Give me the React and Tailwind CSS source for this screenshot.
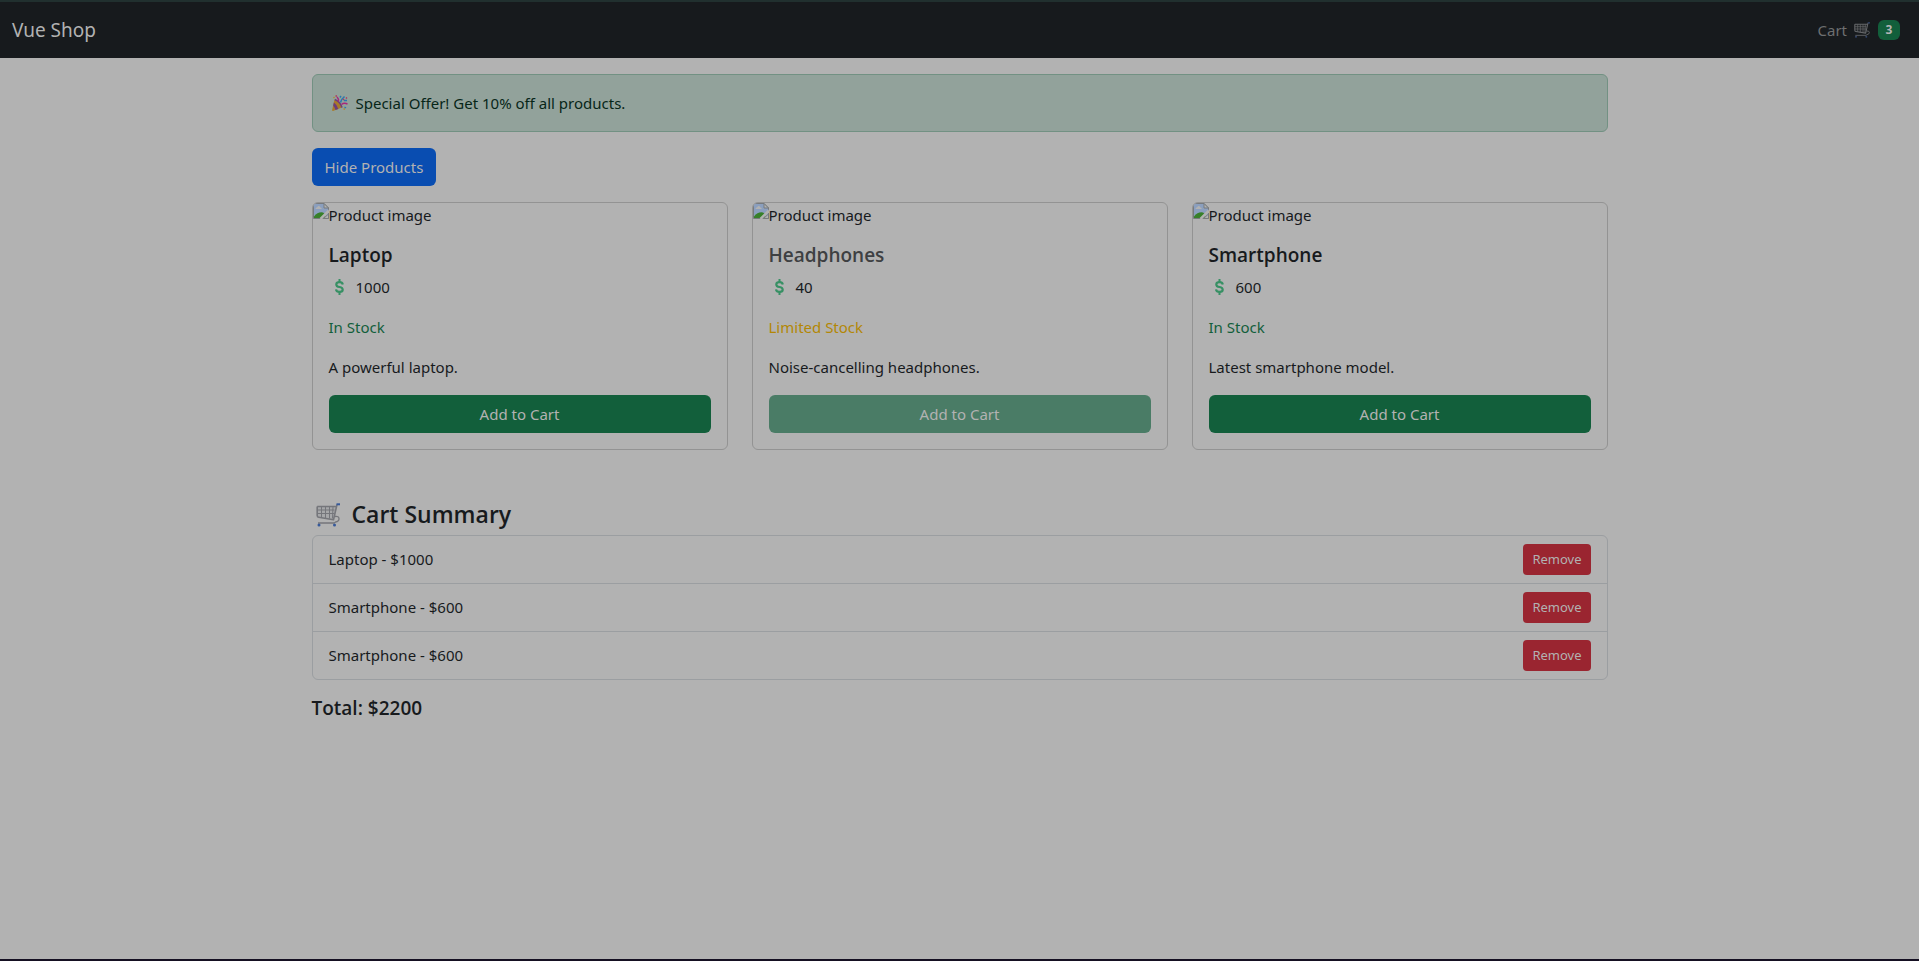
const products = [
  { id: 1, name: 'Laptop', price: 1000, limited: false, text: 'A powerful laptop.' },
  { id: 2, name: 'Headphones', price: 40, limited: true, text: 'Noise-cancelling headphones.' },
  { id: 3, name: 'Smartphone', price: 600, limited: false, text: 'Latest smartphone model.' },
];

const cart = [products[0], products[2], products[2]];

function CartIcon({ className, dim = false }) {
  const metal = dim ? '#66686b' : '#75767b';
  const fill = dim ? '#202326' : '#a6a7a9';
  const accent = dim ? '#34466b' : '#36599a';
  return (
    <svg viewBox="0 0 24 24" className={className} fill="none" aria-hidden="true">
      <path d="M1 3.500h19L17.500 17 1 14.500z" fill={fill} />
      <path
        d="M1.200 3.500h18.500M1.200 3.500v9q0 1.500 1.500 1.700L17.500 16.700 21 1.500"
        stroke={metal}
        strokeWidth="1.600"
        strokeLinejoin="round"
      />
      <path d="M1.500 7h17M1.500 10.500h16.500M5.500 3.500v11M9.500 3.500v11.500M13.500 3.500v12M17 3.500l-.5 12" stroke={metal} strokeWidth="1" />
      <path d="M20.500 1.300H24" stroke={accent} strokeWidth="2" />
      <path d="M19 13.500q4-.5 4 2.200t-3.500 3.300L18 20H2" stroke={metal} strokeWidth="1.300" />
      <circle cx="3" cy="22" r="1.500" fill={accent} />
      <circle cx="18.500" cy="22" r="1.500" fill={accent} />
    </svg>
  );
}

function PartyIcon({ className }) {
  return (
    <svg viewBox="0 0 16 16" className={className} fill="none" aria-hidden="true">
      <path d="M2.500 4.500 0 15.500l1 .5 9.500-3.700Q8.500 7 2.500 4.500z" fill="#a87a28" />
      <path d="M1.900 7.500Q5 9.500 6.300 13.900L3.500 15Q2.800 12 1.200 10.500z" fill="#6b3c7c" />
      <path d="M2.800 4.500Q8.500 7 10 12.500" stroke="#6b3c7c" strokeWidth="1.400" />
      <path d="M6.500 6.500Q7 4 5 2" stroke="#a8267c" strokeWidth="1.500" />
      <path d="M8.500 7.500Q9 4.500 12.500 1.500" stroke="#2b78ae" strokeWidth="1.600" />
      <path d="M9.500 9.500Q12 7.500 15.500 9" stroke="#a8267c" strokeWidth="1.500" />
      <path d="M8 2.500 9 1M12 5.500h3M12.500 12l1.500 1" stroke="#2b78ae" strokeWidth="1.400" />
      <path d="M3.500 1h1.500M14 3.500l1-1M11 5l1-1" stroke="#b0365c" strokeWidth="1.400" />
      <path d="M11.500 14h1.500M1.500 3l1-1" stroke="#b08a30" strokeWidth="1.300" />
    </svg>
  );
}

function DollarIcon() {
  return (
    <svg viewBox="0 0 9 16" className="h-4 w-[9px]" fill="none" stroke="#379064" aria-hidden="true">
      <path d="M4.500 0v3.500M4.500 12.500V16" strokeWidth="2" />
      <path d="M7.800 5.500Q7.300 3.200 4.500 3.200 1.300 3.200 1.300 5.400q0 2 3.200 2.600t3.200 2.700q0 2.200-3.200 2.200-3.100 0-3.500-2.500" strokeWidth="2.200" />
    </svg>
  );
}

function BrokenImageIcon() {
  return (
    <svg viewBox="0 0 16 16" className="size-4" aria-hidden="true">
      <path d="M.5.5h10.500l4.500 4.500v10.500H.5z" fill="#8b9fbe" stroke="#777a7d" />
      <path d="M2.500 6q0-1.700 1.700-1.700Q5 2.500 6.300 3.200q1 .4 1 1.400 1.400 0 1.400 1.400z" fill="#b2b2b2" />
      <path d="M1 15v-1.500Q5 8.500 10 9.500L12 11v4z" fill="#37802a" />
      <path d="M10.500 15.500h5V11z" fill="#b2b2b2" stroke="#777a7d" />
      <path d="M16 7.500 7.500 16" stroke="#b2b2b2" strokeWidth="2.500" />
      <path d="M11 .5v4.500h4.500z" fill="#b2b2b2" stroke="#777a7d" />
    </svg>
  );
}

function ProductCard({ product }) {
  return (
    <article className="overflow-hidden rounded-md border border-[#939393]">
      <div className="flex items-start leading-6">
        <BrokenImageIcon />
        <span>Product image</span>
      </div>
      <div className="p-4">
        <h5 className={`mb-2 font-['Open_Sans',sans-serif] text-[19px] leading-6 font-semibold ${product.limited ? 'text-[#3e4042]' : ''}`}>
          {product.name}
        </h5>
        <p className="mb-4 flex items-center gap-3 pl-[6px] leading-6">
          <DollarIcon />
          {product.price}
        </p>
        <p className={`mb-4 leading-6 ${product.limited ? 'text-[#b38705]' : 'text-[#125f3b]'}`}>
          {product.limited ? 'Limited Stock' : 'In Stock'}
        </p>
        <p className="mb-4 leading-6">{product.text}</p>
        <button
          type="button"
          disabled={product.limited}
          className={`h-[38px] w-full rounded-md text-[#b2b2b2] ${product.limited ? 'bg-[#4a7c66]' : 'bg-[#125f3b]'}`}
        >
          Add to Cart
        </button>
      </div>
    </article>
  );
}

export default function App() {
  const total = cart.reduce((sum, item) => sum + item.price, 0);
  return (
    <div className="flex min-h-screen flex-col border-t-2 border-b-2 border-t-[#21302f] border-b-[#151022] bg-[#b2b2b2] font-['Noto_Sans','Open_Sans',sans-serif] text-[15px] text-[#171a1d]">
      <nav className="flex h-14 items-center justify-between bg-[#171a1d] pr-[19px] pl-3">
        <a href="#" className="text-[19px] text-[#b2b2b2]">Vue Shop</a>
        <a href="#cart" className="flex items-center text-[#6d6f70]">
          Cart
          <CartIcon className="ml-[7px] size-4" dim />
          <span className="ml-2 flex h-5 w-[22px] items-center justify-center rounded-md bg-[#125f3b] text-xs font-bold text-[#b2b2b2]">
            {cart.length}
          </span>
        </a>
      </nav>
      <main className="mx-auto w-full max-w-[1320px] px-3 pt-4">
        <div role="alert" className="mb-4 flex items-center rounded-md border border-[#729183] bg-[#92a29b] p-4 pl-[19px] leading-6 text-[#072618]">
          <PartyIcon className="mr-2 size-4" />
          Special Offer! Get 10% off all products.
        </div>
        <button type="button" className="mb-4 block h-[38px] rounded-md bg-[#094db1] px-[13px] text-[#b2b2b2]">
          Hide Products
        </button>
        <section className="grid grid-cols-3 gap-6">
          {products.map((product) => (
            <ProductCard key={product.id} product={product} />
          ))}
        </section>
        <section id="cart" className="mt-[50px]">
          <h4 className="mb-[6px] flex items-center gap-3 pl-1 font-['Open_Sans',sans-serif] text-[23px] leading-[29px] font-semibold">
            <CartIcon className="size-6" />
            Cart Summary
          </h4>
          <ul className="mb-4 divide-y divide-[#9b9ea1] rounded-md border border-[#9b9ea1]">
            {cart.map((item, index) => (
              <li key={index} className="flex items-center justify-between px-4 py-2">
                {item.name} - ${item.price}
                <button type="button" className="h-[31px] rounded-sm bg-[#9a2530] px-[9px] text-[13px] text-[#b2b2b2]">
                  Remove
                </button>
              </li>
            ))}
          </ul>
          <h5 className="font-['Open_Sans',sans-serif] text-[19px] leading-6 font-semibold">Total: ${total}</h5>
        </section>
      </main>
    </div>
  );
}
